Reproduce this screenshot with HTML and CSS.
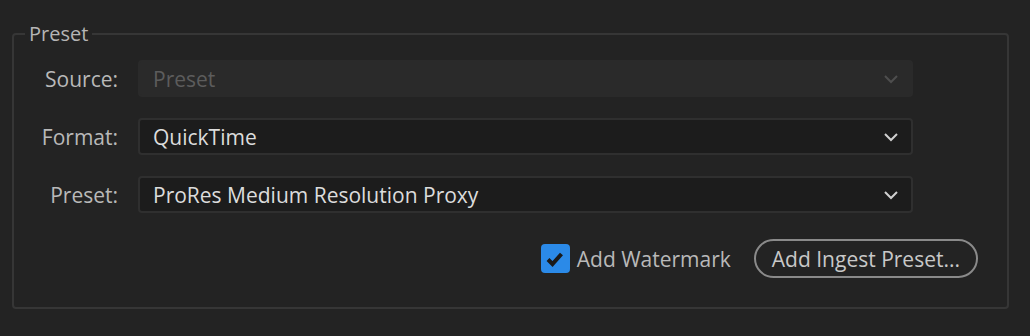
FILE: index.html
```html
<!DOCTYPE html>
<html lang="en">
<head>
  <meta charset="UTF-8" />
  <title>Ingest Settings</title>
  <link rel="stylesheet" href="styles.css">
</head>
<body>
  <fieldset class="group">
    <legend>Preset</legend>

    <div class="rows">
      <label class="row-label">Source:</label>
      <div class="select disabled">
        <span>Preset</span>
        <svg class="chevron" width="16" height="10" viewBox="0 0 16 10"><path d="M2 2 L8 8 L14 2" /></svg>
      </div>

      <label class="row-label">Format:</label>
      <div class="select">
        <span>QuickTime</span>
        <svg class="chevron" width="16" height="10" viewBox="0 0 16 10"><path d="M2 2 L8 8 L14 2" /></svg>
      </div>

      <label class="row-label">Preset:</label>
      <div class="select">
        <span>ProRes Medium Resolution Proxy</span>
        <svg class="chevron" width="16" height="10" viewBox="0 0 16 10"><path d="M2 2 L8 8 L14 2" /></svg>
      </div>
    </div>

    <div class="actions">
      <label class="check">
        <span class="box">
          <svg width="28" height="28" viewBox="0 0 28 28"><path d="M7 14.5 L11.5 19 L20.5 9" /></svg>
        </span>
        Add Watermark
      </label>
      <button class="pill">Add Ingest Preset...</button>
    </div>
  </fieldset>
</body>
</html>
```

FILE: styles.css
```css
body {
  margin: 0;
  background: #232323;
  color: #b9b9b9;
  font-family: 'Open Sans', 'Noto Sans', sans-serif;
  font-size: 21px;
  height: 336px;
  overflow: hidden;
}

.group {
  box-sizing: border-box;
  margin: 24px 0 0 12px;
  width: 997px;
  height: 285px;
  padding: 0;
  border: 2px solid #363636;
  border-radius: 4px;
}

.group legend {
  margin-left: 11px;
  padding: 0 4px;
  color: #b5b5b5;
  font-size: 20px;
  line-height: 20px;
}

.rows {
  display: grid;
  grid-template-columns: 104px 775px;
  column-gap: 20px;
  row-gap: 21px;
  align-items: center;
  margin-top: 16px;
}

.row-label {
  text-align: right;
  color: #b9b9b9;
}

.select {
  box-sizing: border-box;
  height: 37px;
  display: flex;
  align-items: center;
  justify-content: space-between;
  padding: 0 12px 0 13px;
  background: #1c1c1c;
  border: 2px solid #2f2f2f;
  border-radius: 4px;
  color: #dcdcdc;
}

.select.disabled {
  background: #2a2a2a;
  border-color: #2a2a2a;
  color: #5c5c5c;
}

.chevron path {
  fill: none;
  stroke: #d0d0d0;
  stroke-width: 2;
}

.select.disabled .chevron path {
  stroke: #4e4e4e;
}

.actions {
  display: flex;
  justify-content: flex-end;
  align-items: center;
  gap: 23px;
  margin-top: 26px;
  padding-right: 29px;
}

.check {
  display: flex;
  align-items: center;
  gap: 7px;
  color: #b9b9b9;
}

.box {
  width: 29px;
  height: 29px;
  border-radius: 4px;
  background: #2b8ae8;
  display: flex;
  align-items: center;
  justify-content: center;
}

.box path {
  fill: none;
  stroke: #1a1a1a;
  stroke-width: 4;
}

.pill {
  box-sizing: border-box;
  height: 39px;
  padding: 0 16px;
  background: transparent;
  border: 2px solid #8a8a8a;
  border-radius: 20px;
  color: #c8c8c8;
  font-family: inherit;
  font-size: 21px;
}
```
